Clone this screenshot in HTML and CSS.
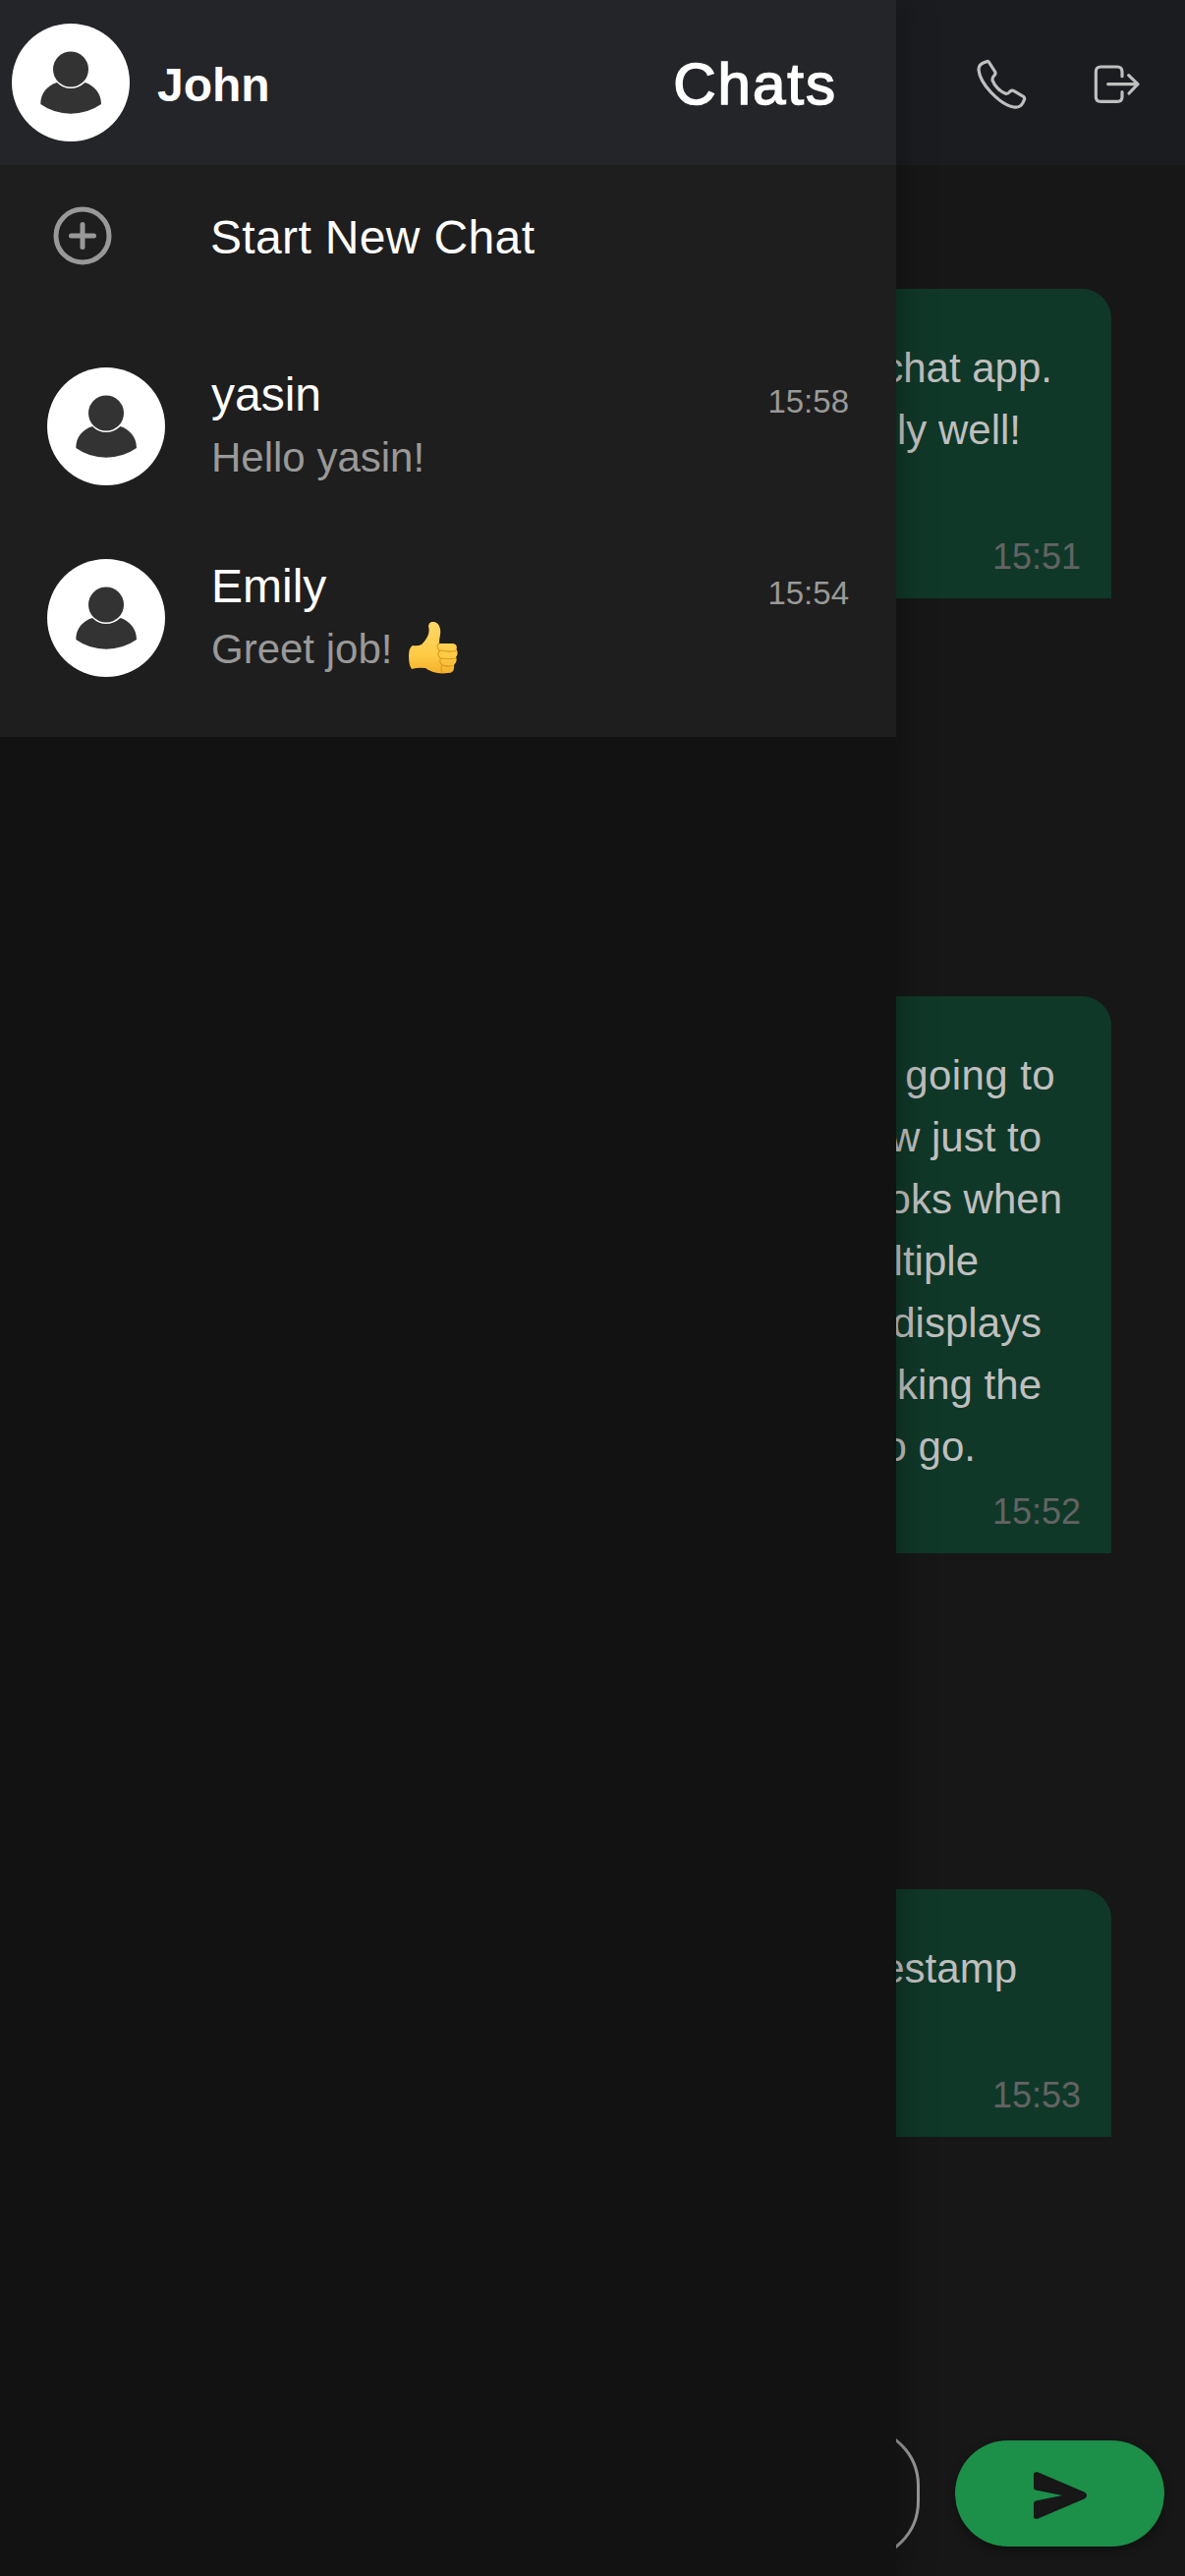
FILE: index.html
```html
<!DOCTYPE html>
<html lang="en">
<head>
<meta charset="utf-8">
<title>Chats</title>
<link rel="stylesheet" href="styles.css">
</head>
<body>
<svg class="defs" aria-hidden="true">
  <symbol id="person" viewBox="0 0 120 120">
    <circle cx="60" cy="46.500" r="18"/>
    <path d="M46 60Q52 66 60 66Q68 66 74.500 60C84 63 91 71 91 82Q77 91.700 60 91.700Q43 91.700 29.300 82C29.300 71 36 63 46 60Z"/>
  </symbol>
</svg>
<div class="app">
  <main class="chat">
    <header class="chat-header">
      <svg class="icon" viewBox="30 50 180 180"><path d="M72 67L62 71Q48 77 48 92C52 135 110 196 155 206Q175 209 183 193L188 182Q189 178 185 174L156 157Q150 153 144 158Q137 167 130 165C112 158 96 140 90 124Q89 116 96 109Q101 104 98 98L80 70Q77 65 72 67Z"/></svg>
      <svg class="icon" viewBox="380 50 180 180"><path d="M485 112V98Q485 83 470 83H420Q405 83 405 98V175Q405 189 420 189H470Q485 189 485 175V160M442 136H533M505 109L533 136L506 164"/></svg>
    </header>
    <section class="messages">
      <article class="bubble bubble-first">
        <div class="lines"><p>chat app.</p><p>ly well!</p></div>
        <time>15:51</time>
      </article>
      <article class="bubble bubble-second">
        <div class="lines"><p>going to</p><p>w just to</p><p>oks when</p><p>ltiple</p><p>displays</p><p>king the</p><p>o go.</p></div>
        <time>15:52</time>
      </article>
      <article class="bubble bubble-third">
        <div class="lines"><p>estamp</p></div>
        <time>15:53</time>
      </article>
    </section>
    <footer class="composer">
      <div class="input"></div>
      <button class="send" aria-label="Send"><svg viewBox="0 0 54 48"><path d="M4 .3L51.500 20.500Q54 21.700 54 24Q54 26.300 51.500 27.500L4 47.700Q0 48.500 0 45V32.500Q0 30 2 29.500L29 24L2 18.500Q0 18 0 15.500V3Q0-.5 4 .3Z"/></svg></button>
    </footer>
  </main>
  <aside class="drawer">
    <header class="drawer-header">
      <div class="avatar"><svg><use href="#person"/></svg></div>
      <span class="user">John</span>
      <h1>Chats</h1>
    </header>
    <nav class="list">
      <div class="new-chat">
        <svg class="plus" viewBox="0 0 60 60"><circle cx="30" cy="30" r="27"/><path d="M30 18.500V41.500M18.500 30H41.500"/></svg>
        <span>Start New Chat</span>
      </div>
      <div class="row">
        <div class="avatar"><svg><use href="#person"/></svg></div>
        <div class="info"><div class="name">yasin</div><div class="preview">Hello yasin!</div></div>
        <time>15:58</time>
      </div>
      <div class="row">
        <div class="avatar"><svg><use href="#person"/></svg></div>
        <div class="info"><div class="name">Emily</div><div class="preview">Greet job! <svg class="thumb" viewBox="0 0 50 53" role="img" aria-label="thumbs up">
          <defs><linearGradient id="skin" x2="0" y2="1"><stop offset="0" stop-color="#ffd766"/><stop offset=".65" stop-color="#ffcb46"/><stop offset="1" stop-color="#f3b02c"/></linearGradient></defs>
          <path fill="url(#skin)" d="M0 35Q0 26 4 24Q9 25 13 23C19 17 22 11 20 4Q21-1 26 0C31 1 33 7 32 13Q31 18 31 22H45Q50 23 48.500 28Q51 32 48 36Q50 40 46 44Q47 52 40 52Q26 54 17 47Q10 46 3 48Q0 44 0 35Z"/>
          <path fill="none" stroke="#dc9a1c" stroke-width="1.100" stroke-linecap="round" d="M31 22Q27 25 31 29M48 29.500Q40 31 32 29Q28 33 32 37M48 37Q40 38.500 33 37Q30 41 34 44M45 44.500Q40 46 34 44Q32 48 34 51"/>
        </svg></div></div>
        <time>15:54</time>
      </div>
    </nav>
  </aside>
</div>
</body>
</html>
```
FILE: styles.css
```css
* { box-sizing: border-box; }
body, h1, p { margin: 0; }
body { background: #171717; font-family: "Liberation Sans", Arial, sans-serif; }
.defs { position: absolute; width: 0; height: 0; }
.app { position: relative; width: 1206px; height: 2622px; overflow: hidden; }

.chat { display: flex; flex-direction: column; height: 100%; background: #171717; }
.chat-header { display: flex; justify-content: flex-end; align-items: flex-start; gap: 57px; height: 168px; padding: 57px 39px 0 0; background: #1b1c20; }
.icon { width: 60px; height: 60px; fill: none; stroke: #bfbfbf; stroke-width: 9.5; stroke-linecap: round; stroke-linejoin: round; }

.messages { flex: 1; display: flex; flex-direction: column; align-items: flex-end; padding: 126px 75px 0 0; }
.bubble { display: flex; flex-direction: column; justify-content: space-between; width: 420px; padding: 49px 31px 22px; border-radius: 30px 30px 0 30px; background: #103828; color: #bfbfbf; text-align: right; }
.bubble-first { height: 315px; margin-bottom: 405px; }
.bubble-second { height: 567px; margin-bottom: 342px; }
.bubble-third { height: 252px; }
.bubble p { font-size: 42px; line-height: 63px; white-space: nowrap; padding-right: 40px; }
.bubble time { font-size: 36px; line-height: 40px; color: #636363; }
.bubble-first p:nth-child(1) { padding-right: 29px; }
.bubble-first p:nth-child(2) { padding-right: 61px; }
.bubble-second p:nth-child(1) { padding-right: 26px; letter-spacing: .4px; }
.bubble-second p:nth-child(3) { padding-right: 19px; }
.bubble-second p:nth-child(4) { padding-right: 104px; }
.bubble-second p:nth-child(7) { padding-right: 107px; }
.bubble-third p { padding-right: 65px; }

.composer { display: flex; align-items: center; gap: 36px; height: 168px; padding-right: 21px; }
.input { width: 936px; height: 136px; border: 3px solid #999; border-radius: 60px; }
.send { display: flex; align-items: center; justify-content: center; width: 213px; height: 108px; padding: 0; border: 0; border-radius: 54px; background: #1c8f49; box-shadow: 0 4px 10px rgba(0, 0, 0, .35); }
.send svg { width: 54px; height: 48px; fill: #171717; margin-top: 3px; }

.drawer { position: absolute; inset: 0 auto 0 0; width: 912px; background: #121212; box-shadow: 0 0 36px rgba(0, 0, 0, .35); }
.drawer-header { display: flex; align-items: center; height: 168px; padding: 0 60px 0 12px; background: #242529; color: #fff; }
.avatar { flex: none; width: 120px; height: 120px; border-radius: 50%; background: #fff; }
.avatar svg { display: block; width: 120px; height: 120px; fill: #333; }
.user { margin: 5px 0 0 28px; font-size: 48px; font-weight: 700; }
h1 { margin: 3px 0 0 auto; font-size: 60px; font-weight: 400; letter-spacing: 2px; -webkit-text-stroke: 1.6px #fff; }

.list { padding-bottom: 24px; background: #1e1e1e; color: #fff; font-size: 48px; }
.new-chat { display: flex; align-items: center; height: 144px; margin-bottom: 24px; padding-left: 54px; gap: 100px; letter-spacing: .35px; }
.new-chat span { margin-top: 2px; }
.plus { width: 60px; height: 60px; fill: none; stroke: #999; stroke-width: 5; stroke-linecap: round; }
.row { display: flex; align-items: center; height: 195px; padding: 0 48px; }
.info { flex: 1; margin: -9px 0 0 47px; }
.name { line-height: 72px; }
.preview { font-size: 42px; line-height: 55px; color: #999; white-space: nowrap; }
.row time { align-self: flex-start; margin-top: 53px; font-size: 33px; line-height: 40px; color: #999; }
.thumb { width: 50px; height: 53px; margin-left: 5px; vertical-align: -11px; }
```
